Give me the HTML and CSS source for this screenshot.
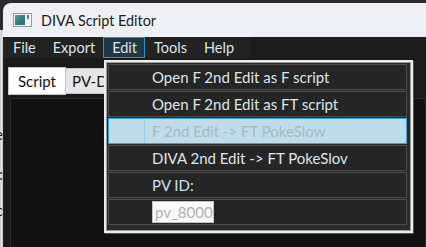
FILE: index.html
```html
<!DOCTYPE html>
<html>
<head>
<meta name="viewport" content="width=device-width, initial-scale=1">
<link rel="stylesheet" href="styles.css">
</head>
<body>

<div class="desk">
  <div class="behind">
    <div class="cut cut-e"><span>Name</span></div>
    <div class="cut cut-colon"><span>ID:</span></div>
    <div class="cut cut-c"><span>Sync</span></div>
  </div>

  <div class="window">
    <div class="titlebar">
      <svg class="appicon" width="19" height="14" viewBox="0 0 19 14">
        <defs>
          <linearGradient id="g" x1="0" y1="0" x2="1" y2="1">
            <stop offset="0" stop-color="#4aa0a8"/>
            <stop offset="0.55" stop-color="#2f8262"/>
            <stop offset="1" stop-color="#3a62a8"/>
          </linearGradient>
        </defs>
        <rect x="0.5" y="0.5" width="18" height="13" fill="#f4f4f4" stroke="#9a9a9a"/>
        <rect x="2" y="2" width="10" height="10" fill="url(#g)"/>
        <rect x="14" y="2" width="2" height="4" fill="#4a7cc8"/>
      </svg>
      <span class="title">DIVA Script Editor</span>
    </div>

    <div class="menubar">
      <div class="menus">
        <span class="menu">File</span>
        <span class="menu">Export</span>
        <span class="menu open">Edit</span>
        <span class="menu">Tools</span>
        <span class="menu">Help</span>
      </div>
    </div>

    <div class="client">
      <div class="tabs">
        <span class="tab active">Script</span>
        <span class="tab">PV-DB</span>
      </div>
      <div class="panel"></div>
    </div>
  </div>
</div>

<div class="popup">
  <div class="item"><span class="label">Open F 2nd Edit as F script</span></div>
  <div class="item"><span class="label">Open F 2nd Edit as FT script</span></div>
  <div class="item hover disabled"><span class="label">F 2nd Edit -&gt; FT PokeSlow</span></div>
  <div class="item"><span class="label">DIVA 2nd Edit -&gt; FT PokeSlov</span></div>
  <div class="item"><span class="label pv">PV ID:</span></div>
  <div class="item"><span class="field">pv_8000</span></div>
</div>

</body>
</html>
```

FILE: styles.css
```css
* {
  box-sizing: border-box;
}

body {
  margin: 0;
  width: 426px;
  height: 247px;
  overflow: hidden;
  background-color: #2b2b2b;
  font-family: Lato, "Open Sans", sans-serif;
  font-size: 15px;
  position: relative;
}

.desk {
  display: flex;
  height: 247px;
}

/* window behind ours, only its right edge shows */
.behind {
  width: 3px;
  flex-shrink: 0;
  margin-top: 30px;
  background-color: #d6d6d6;
  display: flex;
  flex-direction: column;
}

.cut {
  width: 3px;
  overflow: hidden;
  display: flex;
  justify-content: flex-end;
  color: #202020;
  font-size: 15px;
  line-height: 18px;
  white-space: nowrap;
}

.cut-e {
  margin-top: 95px;
}

.cut-colon {
  margin-top: 22px;
}

.cut-c {
  margin-top: 18px;
}

.window {
  flex: 1;
  margin-top: 3px;
  border-top-left-radius: 8px;
  overflow: hidden;
  background-color: #1b1b1b;
  display: flex;
  flex-direction: column;
}

.titlebar {
  flex-shrink: 0;
  height: 34px;
  background-color: #eff0f5;
  display: flex;
  align-items: center;
  padding-left: 10px;
  gap: 9px;
}

.title {
  color: #1b1b1b;
  font-size: 14.4px;
}

.menubar {
  flex-shrink: 0;
  height: 21px;
  background-color: #1c1c1c;
  display: flex;
}

.menus {
  display: flex;
  background-color: #222;
  padding: 0 8px 0 1px;
}

.menu {
  color: #dde3e8;
  font-size: 14.5px;
  padding: 0 7px 0 8px;
  line-height: 19px;
  border: 1px solid transparent;
}

.menu.open {
  background-color: #1d3847;
  border-color: #2a8fc6;
}

.client {
  flex: 1;
  min-height: 0;
  overflow: hidden;
  padding: 9px 0 0 5px;
  background-color: #1a1a1a;
}

.tabs {
  display: flex;
  height: 29px;
}

.tab {
  color: #111;
  background-color: #e6e6e6;
  border: 1px solid #c4c4c4;
  border-left: none;
  height: 26px;
  margin-top: 1px;
  line-height: 24px;
  padding: 0 6px;
}

.tab.active {
  background-color: #fff;
  border-left: 1px solid #c4c4c4;
  height: 28px;
  margin-top: 0;
  line-height: 26px;
  padding: 0 9px;
}

.panel {
  height: 160px;
  margin: 2px 0 0 2px;
  background-color: #111;
  border: 1px solid #2c2c2c;
}

.popup {
  position: absolute;
  left: 104px;
  top: 60px;
  width: 309px;
  height: 173px;
  background-color: #2a2a2a;
  border: 2px solid #ececec;
  box-shadow: inset 0 0 0 1px #9c9c9c, 1px 1px 0 #555;
  padding: 2px 4px 2px 2px;
}

.item {
  height: 26px;
  margin-bottom: 1px;
  background-color: #252525;
  border: 1px solid #4c4c4c;
  display: flex;
  align-items: center;
  padding-left: 43px;
  color: #dde4ea;
  white-space: nowrap;
}

.item.hover {
  background-color: #bfdcea;
  border-color: #3aa2e0;
  background-image: linear-gradient(to right, transparent 35px, #9ecbe4 35px, #9ecbe4 36px, transparent 36px);
}

.item.disabled {
  color: #a9b9c2;
}

.label.pv {
  color: #cfe0f0;
}

.field {
  width: 62px;
  height: 22px;
  background-color: #fafafa;
  border: 1px solid #c2c2c2;
  color: #b2b2b2;
  line-height: 20px;
  padding-left: 2px;
}
```
